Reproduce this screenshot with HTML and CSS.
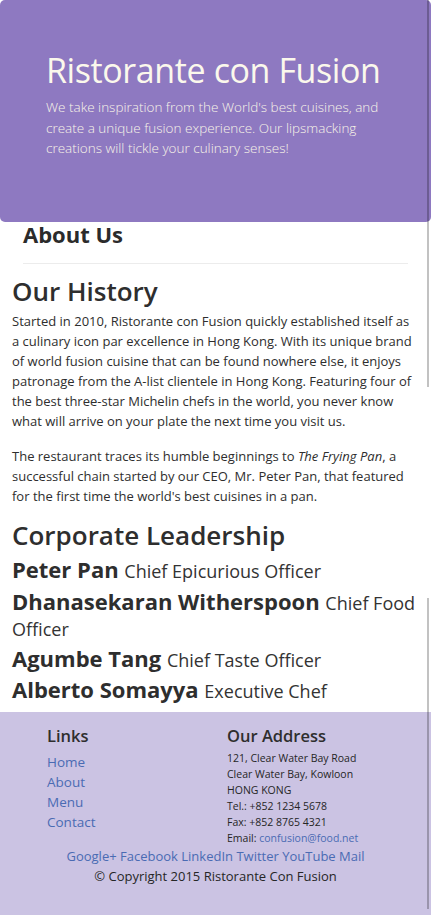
FILE: index.html
```html
<!DOCTYPE html>
<html lang="en">
<head>
<meta charset="utf-8">
<title>Ristorante con Fusion: About Us</title>
<link rel="stylesheet" href="styles.css">
</head>
<body>
<header class="jumbotron">
  <h1 class="brand">Ristorante con Fusion</h1>
  <p class="tagline">We take inspiration from the World's best cuisines, and create a unique fusion experience. Our lipsmacking creations will tickle your culinary senses!</p>
</header>

<main class="content">
  <div class="page-head">
    <h3 class="page-title">About Us</h3>
    <hr class="rule">
  </div>

  <section class="history">
    <h2 class="section-title">Our History</h2>
    <p class="text">Started in 2010, Ristorante con Fusion quickly established itself as a culinary icon par excellence in Hong Kong. With its unique brand of world fusion cuisine that can be found nowhere else, it enjoys patronage from the A-list clientele in Hong Kong. Featuring four of the best three-star Michelin chefs in the world, you never know what will arrive on your plate the next time you visit us.</p>
    <p class="text text-2">The restaurant traces its humble beginnings to <em>The Frying Pan</em>, a successful chain started by our CEO, Mr. Peter Pan, that featured for the first time the world's best cuisines in a pan.</p>
  </section>

  <section class="leaders">
    <h2 class="section-title lead-title">Corporate Leadership</h2>
    <h3 class="leader">Peter Pan <small class="role">Chief Epicurious Officer</small></h3>
    <h3 class="leader">Dhanasekaran Witherspoon <small class="role">Chief Food Officer</small></h3>
    <h3 class="leader">Agumbe Tang <small class="role">Chief Taste Officer</small></h3>
    <h3 class="leader">Alberto Somayya <small class="role">Executive Chef</small></h3>
  </section>
</main>

<footer class="footer">
  <div class="footer-cols">
    <div class="col-links">
      <h5 class="foot-head">Links</h5>
      <ul class="link-list">
        <li><a href="#">Home</a></li>
        <li><a href="#">About</a></li>
        <li><a href="#">Menu</a></li>
        <li><a href="#">Contact</a></li>
      </ul>
    </div>
    <div class="col-address">
      <h5 class="foot-head">Our Address</h5>
      <address class="addr">
        121, Clear Water Bay Road<br>
        Clear Water Bay, Kowloon<br>
        HONG KONG<br>
        Tel.: +852 1234 5678<br>
        Fax: +852 8765 4321<br>
        Email: <a href="#">confusion@food.net</a>
      </address>
    </div>
  </div>
  <div class="social">
    <a href="#">Google+</a> <a href="#">Facebook</a> <a href="#">LinkedIn</a> <a href="#">Twitter</a> <a href="#">YouTube</a> <a href="#">Mail</a>
  </div>
  <p class="copy">© Copyright 2015 Ristorante Con Fusion</p>
</footer>

<div class="edge edge-top"></div>
<div class="edge edge-bottom"></div>
</body>
</html>
```

FILE: styles.css
```css
* { box-sizing: border-box; }

html, body {
  margin: 0;
  padding: 0;
}

body {
  font-family: "Open Sans", "Noto Sans", "DejaVu Sans", sans-serif;
  color: #333;
  background: #fff;
  width: 431px;
  position: relative;
}

.jumbotron {
  background: #8e79c1;
  border-radius: 5px;
  padding: 49px 40px 0 46px;
  height: 222px;
  margin: 0;
}

.brand {
  margin: 0;
  font-size: 34px;
  line-height: 42px;
  font-weight: 400;
  color: #fbf8ec;
  letter-spacing: -0.4px;
}

.tagline {
  margin: 6px 0 0;
  font-size: 13.5px;
  line-height: 20.5px;
  font-weight: 300;
  color: #f8f4e8;
}

.content {
  padding: 0 12px;
}

.page-head {
  padding: 0 11px;
}

.page-title {
  margin: 0;
  font-size: 22px;
  line-height: 24px;
  font-weight: 700;
  color: #2b2b2b;
}

.rule {
  margin: 17px 0 0;
  border: 0;
  border-top: 1px solid #ececec;
}

.section-title {
  margin: 11px 0 0;
  font-size: 26px;
  line-height: 32px;
  font-weight: 600;
  color: #2e2e2e;
}

.text {
  margin: 4px 0 0;
  font-size: 13px;
  line-height: 20px;
  color: #2e2e2e;
}

.text-2 {
  margin-top: 15px;
}

.lead-title {
  margin-top: 13px;
}

.leader {
  margin: 5px 0 0;
  font-size: 22px;
  line-height: 26px;
  font-weight: 700;
  color: #2e2e2e;
}

.lead-title + .leader {
  margin-top: 5px;
}

.leader:nth-of-type(2) {
  margin-top: 6px;
}

.role {
  font-size: 18px;
  line-height: 20px;
  font-weight: 400;
  color: #333;
}

.leaders {
  padding-bottom: 10px;
}

.footer {
  background: #cbc3e3;
  padding: 13px 0 30px;
}

.footer-cols {
  display: grid;
  grid-template-columns: 180px 1fr;
  padding-left: 47px;
}

.foot-head {
  margin: 0;
  font-size: 16.5px;
  line-height: 22px;
  font-weight: 600;
  color: #2e2e2e;
}

.link-list {
  list-style: none;
  margin: 5px 0 0;
  padding: 0;
}

.link-list li {
  font-size: 13.5px;
  line-height: 20px;
}

a {
  color: #4a6bb3;
  text-decoration: none;
}

.addr {
  margin: 3px 0 0;
  font-style: normal;
  font-size: 10.5px;
  line-height: 16px;
  color: #262626;
}

.social {
  text-align: center;
  font-size: 13px;
  line-height: 20px;
}

.copy {
  margin: 0;
  text-align: center;
  font-size: 13px;
  line-height: 20px;
  color: #262626;
}

.edge {
  position: absolute;
  left: 427px;
  width: 2px;
  background: rgba(0, 0, 0, 0.24);
}

.edge-top {
  top: 0;
  height: 387px;
}

.edge-bottom {
  top: 598px;
  height: 311px;
}
```
